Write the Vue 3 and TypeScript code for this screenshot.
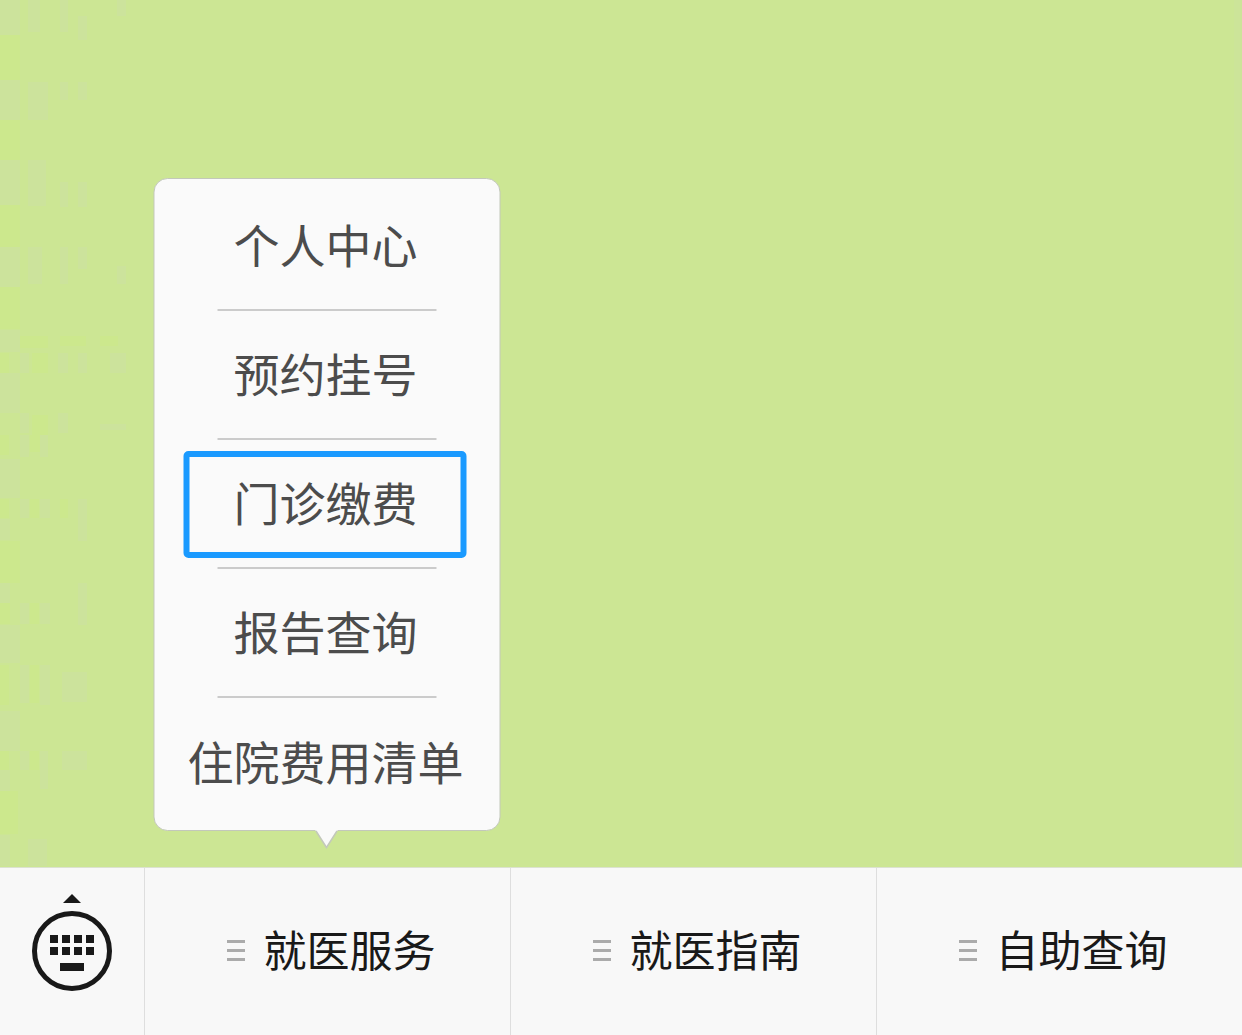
<script setup lang="ts">
interface Tab {
  label: string
  menu?: string[]
}

const tabs: Tab[] = [
  { label: '就医服务', menu: ['个人中心', '预约挂号', '门诊缴费', '报告查询', '住院费用清单'] },
  { label: '就医指南' },
  { label: '自助查询' },
]
const selected = '门诊缴费'

// Faint mosaic along the left edge of the backdrop: x, y, width, height, colour
type Patch = [number, number, number, number, string]
const grey = '#cce39f'
const lime = '#cde98c'
const patches: Patch[] = [
  [0, 0, 20, 35, grey], [28, 0, 12, 32, grey], [60, 0, 8, 32, grey], [78, 16, 9, 24, grey], [117, 0, 9, 16, grey],
  [0, 35, 20, 45, lime], [0, 80, 20, 40, grey], [28, 82, 20, 38, grey], [60, 82, 8, 18, grey], [78, 82, 9, 18, grey],
  [0, 120, 20, 40, lime], [0, 160, 20, 45, grey], [28, 160, 18, 46, grey], [60, 182, 8, 25, grey], [78, 182, 9, 25, grey],
  [0, 205, 20, 42, lime], [0, 247, 20, 40, grey], [28, 247, 14, 37, grey], [60, 247, 8, 37, grey], [78, 247, 9, 22, grey], [117, 266, 9, 18, grey],
  [0, 287, 20, 42, lime], [0, 330, 20, 22, grey], [20, 336, 28, 12, lime], [60, 336, 26, 10, lime], [100, 336, 18, 10, lime],
  [0, 353, 9, 20, lime], [20, 353, 9, 20, grey], [32, 353, 16, 20, lime], [58, 353, 10, 20, grey], [78, 353, 9, 20, grey], [110, 353, 16, 20, grey],
  [0, 373, 20, 40, grey], [20, 413, 9, 20, grey], [32, 415, 16, 20, lime], [58, 413, 10, 20, grey], [100, 424, 26, 6, grey],
  [0, 435, 9, 20, lime], [20, 435, 9, 22, grey], [30, 435, 10, 17, lime], [40, 435, 8, 22, grey],
  [0, 459, 20, 39, grey], [0, 499, 9, 19, lime], [20, 499, 9, 19, grey], [30, 499, 9, 19, lime], [40, 499, 10, 19, grey], [60, 499, 8, 19, lime], [78, 499, 9, 42, grey],
  [0, 519, 10, 21, grey], [0, 541, 20, 42, lime], [0, 583, 10, 20, grey], [78, 583, 9, 42, grey],
  [0, 603, 10, 21, lime], [20, 603, 9, 21, grey], [30, 603, 9, 21, lime], [40, 603, 10, 21, grey],
  [0, 625, 20, 38, grey], [0, 665, 9, 40, lime], [20, 665, 9, 38, grey], [30, 665, 9, 38, lime], [40, 665, 10, 40, grey], [62, 672, 25, 30, grey],
  [0, 711, 20, 40, grey], [0, 751, 9, 19, lime], [20, 751, 9, 19, grey], [30, 751, 9, 19, lime], [40, 751, 8, 38, grey], [62, 751, 25, 19, grey],
  [0, 770, 10, 21, grey], [0, 791, 18, 43, lime], [0, 835, 10, 31, grey], [28, 839, 19, 27, grey],
]
</script>

<template>
  <div class="screen">
    <main class="backdrop">
      <svg class="mosaic" width="130" height="867" aria-hidden="true">
        <rect
          v-for="([x, y, w, h, fill], i) in patches"
          :key="i"
          :x="x"
          :y="y"
          :width="w"
          :height="h"
          :fill="fill"
        />
      </svg>
    </main>

    <nav class="bar">
      <button class="keyboard" type="button" aria-label="键盘">
        <svg width="80" height="98" viewBox="0 0 80 98" fill="#191919" aria-hidden="true">
          <path d="M40 0 49 9H31Z" />
          <circle cx="40" cy="57" r="37.5" fill="none" stroke="#191919" stroke-width="5" />
          <path d="M18 41h8v8h-8zM30 41h8v8h-8zM42 41h8v8h-8zM54 41h8v8h-8zM18 53h8v8h-8zM30 53h8v8h-8zM42 53h8v8h-8zM54 53h8v8h-8zM28 69h24v8H28z" />
        </svg>
      </button>

      <div v-for="tab in tabs" :key="tab.label" class="tab">
        <button class="tab-button" type="button">
          <svg width="18" height="21" viewBox="0 0 18 21" fill="#ababab" aria-hidden="true">
            <path d="M0 0h18v3H0zM0 9h18v3H0zM0 18h18v3H0z" />
          </svg>
          <span class="tab-label">{{ tab.label }}</span>
        </button>

        <div v-if="tab.menu" class="popup">
          <ul class="menu">
            <li v-for="entry in tab.menu" :key="entry" class="row">
              <button class="entry" :class="{ selected: entry === selected }" type="button">{{ entry }}</button>
            </li>
          </ul>
          <svg class="tail" width="23" height="19" viewBox="0 0 23 19" aria-hidden="true">
            <path d="M0 0H23L22 1 11.500 18 1 1Z" fill="#fafafa" />
            <path d="M1 1 11.500 17.500 22 1" fill="none" stroke="#c3c8bb" stroke-width="1.500" />
          </svg>
        </div>
      </div>
    </nav>
  </div>
</template>

<style>
body {
  margin: 0;
}
</style>

<style scoped>
.screen {
  display: flex;
  flex-direction: column;
  min-height: 100vh;
  font-family: "Noto Sans CJK SC", sans-serif;
  background: #cce694;
}

button {
  margin: 0;
  padding: 0;
  border: 0;
  background: none;
  font: inherit;
  color: inherit;
  cursor: pointer;
}

.backdrop {
  position: relative;
  flex: 1;
  border-right: 8px solid #cce499;
}

.mosaic {
  position: absolute;
  top: 0;
  left: 0;
  opacity: 0.8;
}

.bar {
  display: flex;
  height: 167px;
  border-top: 1px solid #dce2d0;
  background: #f8f8f8;
}

.keyboard {
  display: flex;
  justify-content: center;
  align-items: flex-start;
  width: 144px;
  padding-top: 26px;
}

.tab {
  position: relative;
  display: flex;
  flex: 1;
  border-left: 1px solid #dedede;
}

.tab-button {
  display: flex;
  flex: 1;
  justify-content: center;
  align-items: center;
  gap: 19px;
  padding: 0 0 2px 7px;
  font-size: 43px;
  line-height: 64px;
  color: #191919;
}

.tab-label {
  padding-bottom: 6px;
}

.popup {
  position: absolute;
  bottom: 100%;
  left: calc(50% - 1px);
  width: 347px;
  padding-bottom: 37px;
  transform: translateX(-50%);
}

.menu {
  margin: 0;
  padding: 3px 0;
  border: 1px solid #c3c8bb;
  border-radius: 14px;
  background: #fafafa;
  list-style: none;
}

.row {
  display: flex;
  flex-direction: column;
  align-items: center;
  height: 129px;
}

.row:not(:last-child)::after {
  content: "";
  width: 219px;
  height: 2px;
  background: #cbcbcb;
}

.entry {
  position: relative;
  flex: 1;
  margin-right: 2px;
  padding-bottom: 6px;
  font-size: 46px;
  line-height: 68px;
  color: #4c4c4c;
  white-space: nowrap;
}

.selected::before {
  content: "";
  position: absolute;
  inset: 11px -49px 9px -50px;
  border: 6px solid #1a9aff;
  border-radius: 5px;
}

.tail {
  position: absolute;
  bottom: 19px;
  left: 50%;
  transform: translateX(-50%);
}
</style>
